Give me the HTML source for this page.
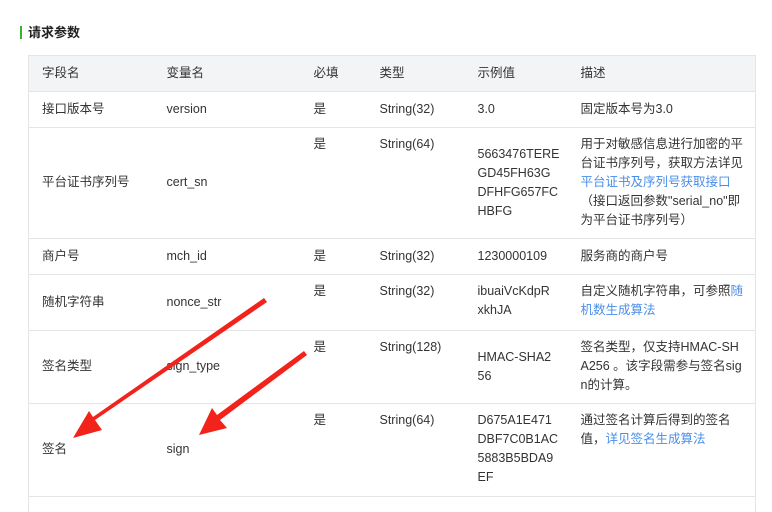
<!DOCTYPE html>
<html><head><meta charset="utf-8"><style>
body{margin:0;background:#fff;width:772px;height:500px;overflow:hidden;position:relative;font-family:"Liberation Sans","Noto Sans CJK SC",sans-serif;font-size:12.5px;color:#333;}
.title{position:absolute;left:20px;top:24px;font-size:13px;font-weight:bold;color:#222;line-height:17px;}
.title:before{content:"";position:absolute;left:0;top:2px;width:2px;height:13px;background:#3cb034;}
.title span{padding-left:8px;}
table{position:absolute;left:28px;top:55px;border-collapse:collapse;table-layout:fixed;width:728px;}
td{border-top:1px solid #e5e5e5;padding:7px 0 8px 13px;line-height:19px;vertical-align:top;white-space:nowrap;}
td.m{vertical-align:middle;}
tr.h td{background:#f3f4f6;height:20px;vertical-align:middle;}
table{border-left:1px solid #e5e5e5;border-right:1px solid #e5e5e5;}
a{color:#4a8ee8;text-decoration:none;}
</style></head><body>
<div class="title"><span>请求参数</span></div>
<table>
<colgroup><col style="width:125px"><col style="width:147px"><col style="width:66px"><col style="width:98px"><col style="width:103px"><col></colgroup>
<tr class="h"><td>字段名</td><td>变量名</td><td>必填</td><td>类型</td><td>示例值</td><td>描述</td></tr>
<tr style="height:36px"><td class="m">接口版本号</td><td class="m">version</td><td class="m">是</td><td class="m">String(32)</td><td class="m">3.0</td><td class="m">固定版本号为3.0</td></tr>
<tr style="height:111px"><td class="m">平台证书序列号</td><td class="m">cert_sn</td><td>是</td><td>String(64)</td><td class="m">5663476TERE<br>GD45FH63G<br>DFHFG657FC<br>HBFG</td><td>用于对敏感信息进行加密的平<br>台证书序列号，获取方法详见<br><a>平台证书及序列号获取接口</a><br>（接口返回参数"serial_no"即<br>为平台证书序列号）</td></tr>
<tr style="height:36px"><td class="m">商户号</td><td class="m">mch_id</td><td class="m">是</td><td class="m">String(32)</td><td class="m">1230000109</td><td class="m">服务商的商户号</td></tr>
<tr style="height:56px"><td class="m">随机字符串</td><td class="m">nonce_str</td><td>是</td><td>String(32)</td><td>ibuaiVcKdpR<br>xkhJA</td><td>自定义随机字符串，可参照<a>随</a><br><a>机数生成算法</a></td></tr>
<tr style="height:73px"><td class="m">签名类型</td><td class="m">sign_type</td><td>是</td><td>String(128)</td><td class="m">HMAC-SHA2<br>56</td><td>签名类型，仅支持HMAC-SH<br>A256 。该字段需参与签名sig<br>n的计算。</td></tr>
<tr style="height:93px"><td class="m">签名</td><td class="m">sign</td><td>是</td><td>String(64)</td><td>D675A1E471<br>DBF7C0B1AC<br>5883B5BDA9<br>EF</td><td>通过签名计算后得到的签名<br>值，<a>详见签名生成算法</a></td></tr>
<tr style="height:10px"><td></td><td></td><td></td><td></td><td></td><td></td></tr>
</table>
<svg width="772" height="500" style="position:absolute;left:0;top:0">
<polygon fill="#f2231b" points="264,298 267,302 95,420 102,430 73,438 89,411 93,417" />
<polygon fill="#f2231b" points="304,351 307,355 220,420 227,428 199,435 212,408 217,415" />
</svg>
</body></html>
